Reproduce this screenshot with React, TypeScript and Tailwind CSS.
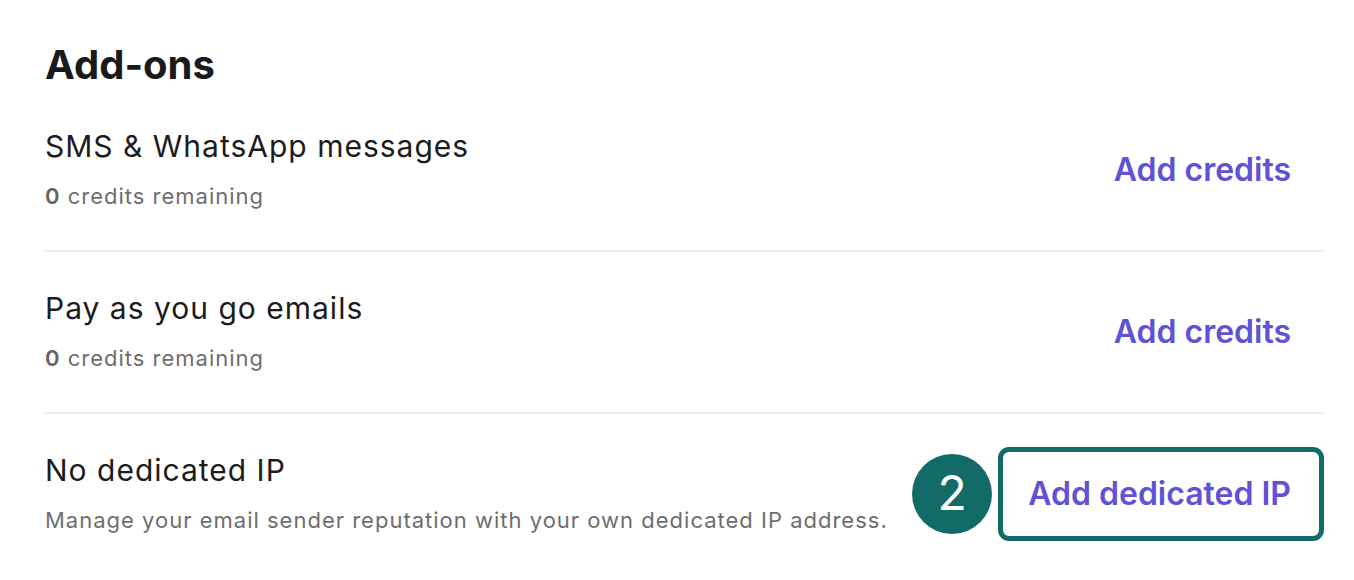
import React from "react";

function Row({
  title,
  sub,
  action,
  last,
  badge,
}: {
  title: string;
  sub: React.ReactNode;
  action: string;
  last?: boolean;
  badge?: boolean;
}) {
  return (
    <div
      className={`flex items-center justify-between pt-[38px] pb-[38px] ${
        last ? "" : "border-b-2 border-[#efefef]"
      }`}
    >
      <div className="flex flex-col">
        <div className="text-[30px] leading-[36px] tracking-[1px] text-[#1c1c1c]">{title}</div>
        <div className="mt-[16px] text-[22px] leading-[32px] tracking-[1px] text-[#6e6e6e]">{sub}</div>
      </div>
      <div className="flex items-center gap-[11px] mr-[4px]">
        {badge && (
          <div className="flex h-20 w-20 items-center justify-center rounded-full bg-[#136b68] pb-[2px] text-[48px] leading-none text-white">
            2
          </div>
        )}
        <button
          className={`rounded-[6px] py-[22px] pr-[28px] text-[32px] font-semibold leading-[40px] text-[#6051d6] ${
            badge ? "pl-[25px] outline-[5px] outline-solid outline-[#136b68]" : "pl-[28px]"
          }`}
        >
          {action}
        </button>
      </div>
    </div>
  );
}

export default function App() {
  return (
    <div className="h-[580px] w-[1354px] overflow-hidden bg-white pl-[45px] pr-[31px] pt-[41px] font-['Inter',sans-serif]">
      <h1 className="mb-[1px] text-[40px] font-bold leading-[48px] text-[#1a1a1a]">Add-ons</h1>
      <Row
        title="SMS & WhatsApp messages"
        sub={
          <>
            <span className="font-semibold text-[#636363]">0</span> credits remaining
          </>
        }
        action="Add credits"
      />
      <Row
        title="Pay as you go emails"
        sub={
          <>
            <span className="font-semibold text-[#636363]">0</span> credits remaining
          </>
        }
        action="Add credits"
      />
      <Row
        title="No dedicated IP"
        sub="Manage your email sender reputation with your own dedicated IP address."
        action="Add dedicated IP"
        last
        badge
      />
    </div>
  );
}
